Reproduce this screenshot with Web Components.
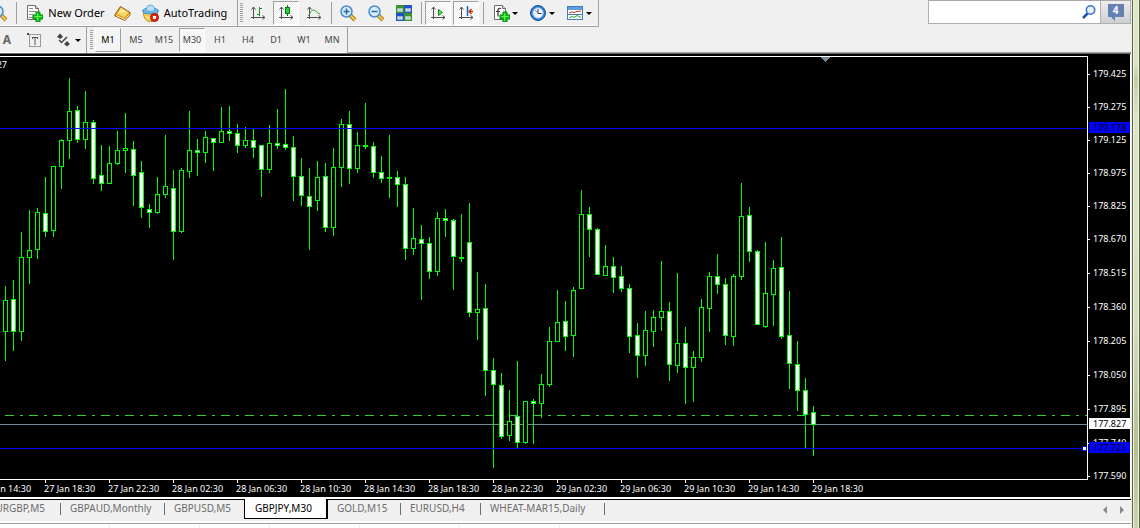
<!DOCTYPE html>
<html lang="en">
<head>
<meta charset="utf-8">
<title>GBPJPY,M30</title>
<style>
html,body{margin:0;height:100%}
body{background:#f0f0f0;font-family:"Noto Sans","DejaVu Sans Condensed",sans-serif;overflow:hidden}
</style>
</head>
<body>
<mt-app></mt-app>
<script>
const define = (name, html, setup) => customElements.define(name, class extends HTMLElement {
  constructor() {
    super();
    const t = document.createElement('template');
    t.innerHTML = html;
    this.attachShadow({mode: 'open'}).append(t.content.cloneNode(true));
  }
  connectedCallback() { if (setup) setup(this, this.shadowRoot); }
});

/* ---------- icons ---------- */
const axes = '<path d="M3.5 2v12M1 12.500h14" stroke="#505050"/><path d="M1.500 4.500l2-2.500 2 2.500M12.500 10.500l2.500 2-2.500 2" fill="none" stroke="#505050"/>';
const lens = sign => `<path d="M10 10l5 5" stroke="#a87818" stroke-width="4"/><path d="M10 10l5 5" stroke="#f4cc50" stroke-width="2"/><circle cx="6.500" cy="6.500" r="5.500" fill="#d4ecfb" stroke="#4a8cc8" stroke-width="1.500"/>${sign}`;
const sheet = '<path d="M1.500.5h8l3 3v11h-11z" fill="#fff" stroke="#6c6c6c"/><path d="M9.500.5v3h3" fill="#ddd" stroke="#6c6c6c"/>';
const plus = '<path d="M10 7h4v3h3v4h-3v3h-4v-3H7v-4h3z" fill="#10c818" stroke="#07860c"/><path d="M11.500 8.500v7M8.500 11.500h7" stroke="#6df05a"/>';
const ICONS = {
  find: lens(''),
  order: sheet + '<path d="M3 3.500h4M3 6.500h7M3 9.500h4M3 12.500h4" stroke="#8a8a8a"/>' + plus,
  book: '<path d="M1 9.500L6.500 1.500 16 7.500v2.500l-5 5.500-10-4.500z" fill="#d89416" stroke="#8a5a0c"/><path d="M2.500 9L7 2.500l8 5-4.500 5z" fill="#f8d468"/><path d="M5 7.500L7.500 4l5 3z" fill="#fdeeb0"/><path d="M2 10.500l9 4 4.500-5" fill="none" stroke="#fff3b8"/>',
  auto: '<path d="M1.500 8c0 5 3 8.500 7 8.500s7-3.500 7-8.500z" fill="#f6cf4c" stroke="#c08c18"/><path d="M3 11l5.500 3 3-3" fill="none" stroke="#fdeea6"/><ellipse cx="8.500" cy="6" rx="8" ry="3" fill="#6db8ea" stroke="#3f8fca"/><path d="M4 5c0-6.500 9-6.500 9 0-2 2-7 2-9 0z" fill="#b4e1fa" stroke="#5aa4d6"/><circle cx="12.500" cy="12.500" r="4" fill="#e02a14" stroke="#a61408"/><path d="M11 11h3v3h-3z" fill="#fff"/>',
  bars: axes + '<path d="M9.500 2v9M7 9.500h2.500M9.500 3.500H12" stroke="#0b9a1c" fill="none"/>',
  candles: axes + '<path d="M9.500 0v11" stroke="#067a12"/><rect x="7.500" y="2.500" width="4" height="6" fill="#2ed040" stroke="#067a12"/>',
  line: axes + '<path d="M2 11c2-2 3-6 5.500-6s3 3 6.500 4" fill="none" stroke="#2f9e3c"/>',
  zoomin: lens('<path d="M6.500 3.500v6M3.500 6.500h6" stroke="#2768a8" stroke-width="1.500"/>'),
  zoomout: lens('<path d="M3.500 6.500h6" stroke="#2768a8" stroke-width="1.500"/>'),
  tiles: '<path d="M0 0h8v8H0zM8 8h8v8H8z" fill="#39942e"/><path d="M8 0h8v8H8zM0 8h8v8H0z" fill="#1f52c8"/><path d="M1.500 3.500h5v3h-5zM9.500 3.500h5v3h-5zM1.500 11.500h5v3h-5zM9.500 11.500h5v3h-5z" fill="#eef5ff" stroke="#a9c8a5" stroke-width=".6"/><path d="M2.500 5h3M10.500 5h3M2.500 13h3M10.500 13h3" stroke="#8fa7c4"/>',
  scroll: axes + '<path d="M8.500 4.500v6l4-3z" fill="#5fe064" stroke="#0b8c18"/>',
  shift: axes + '<path d="M9.500 1v10" stroke="#1767b0" stroke-width="1.500"/><path d="M15 6.500h-4M13.500 4L11 6.500 13.500 9" fill="none" stroke="#c0340c" stroke-width="1.300"/>',
  indicator: sheet + '<path d="M8 3.500c-3-1-3 1-3 3v5M3 6.500h4" fill="none" stroke="#333" stroke-width="1.200"/>' + plus,
  clock: '<circle cx="8" cy="8" r="7.500" fill="#2b7cd0" stroke="#164f94"/><circle cx="8" cy="8" r="5.300" fill="#f2f8ff" stroke="#7db4ea"/><path d="M8 4v4.500h3.500" fill="none" stroke="#333"/><path d="M5 5l3 3" stroke="#888"/>',
  template: '<rect x=".5" y="1.500" width="15" height="13" fill="#fff" stroke="#3f7ebc"/><path d="M1 2h14v3H1z" fill="#5ea0dc"/><path d="M1 9.500h14" stroke="#3f7ebc"/><path d="M2 8l3-1 2 .5 3-1 4-.5" fill="none" stroke="#b03a20"/><path d="M2 13l3-1.500 2 1 3-2 4 2" fill="none" stroke="#2f9e3c"/>',
  textbox: '<rect x="2.500" y="2.500" width="11" height="12" fill="none" stroke="#444" stroke-dasharray="1 1"/><path d="M5 5.500h6M8 5v8M5.500 5v2M10.500 5v2" stroke="#555" fill="none"/><path d="M0 1h2v2H0z" fill="#444"/>',
  shapes: '<path d="M4 1.500L7 4.500 4.500 7 1 5zM11 9l3 3-3 2.500L8 12z" fill="#444"/><path d="M3 8l2.500 2.500L11 5" fill="none" stroke="#444" stroke-width="1.500"/>',
  search: '<path d="M6.500 9.500L2 14" stroke="#1d50b4" stroke-width="2.500"/><circle cx="9.500" cy="6" r="4.200" fill="#e7f0fd" stroke="#3b70d0" stroke-width="1.600"/>'
};
define('mt-icon', '<style>:host{display:block;width:18px;height:18px;flex:none}svg{display:block}</style><svg width="18" height="18" viewBox="-1 -1 18 18" aria-hidden="true"></svg>',
  (el, r) => { r.querySelector('svg').innerHTML = ICONS[el.getAttribute('name')]; });

/* ---------- toolbar parts ---------- */
define('mt-sep', '<style>:host{display:block;width:1px;margin:2px 1px 2px 2px;align-self:stretch;background:#a0a0a0;flex:none}</style>');
define('mt-grip', '<style>:host{display:block;width:3px;margin:3px 0;align-self:stretch;flex:none;background:repeating-linear-gradient(#a0a0a0 0 1px,#f0f0f0 1px 2px)}</style>');
define('mt-tool', `<style>
:host{display:block;flex:none}
button{display:flex;align-items:center;justify-content:center;gap:5px;box-sizing:border-box;height:24px;width:100%;margin:0;padding:0;border:1px solid transparent;background:none;font:11px/16px "Noto Sans",sans-serif;color:#000;white-space:nowrap}
:host([square]){width:26px}
:host([frame]) button{font-size:9px;color:#444}
:host([raised]) button{border-color:#fff #a0a0a0 #a0a0a0 #fff;background:#f5f5f5;color:#000}
:host([pressed]) button{border-color:#a0a0a0 #fff #fff #a0a0a0;background:repeating-conic-gradient(#fff 0 25%,#f0f0f0 0 50%) 0 0/2px 2px}
:host([menu]) button{gap:2px}
i{display:none;border:3px solid transparent;border-top-color:#000;border-bottom:0}
:host([menu]) i{display:block}
</style><button type="button"><slot></slot><i></i></button>`, (el, r) => {
  const l = el.getAttribute('label'); if (l) r.querySelector('button').setAttribute('aria-label', l);
  if (!el.hasAttribute('menu')) r.querySelector('i').remove();
});
define('mt-toolbar', `<style>
:host{display:flex;align-items:center;box-sizing:border-box;height:27px;gap:2px;border-bottom:1px solid #a0a0a0;border-right:1px solid #a0a0a0;padding-right:2px;flex:none;box-shadow:inset 0 -1px #f8f8f8}
:host([last]){border-bottom:0;height:26px}
</style><slot></slot>`);

define('mt-search', `<style>
:host{display:flex;box-sizing:border-box;width:203px;height:24px;border:1px solid #b0b0b0;border-top-color:#a8a8a8;background:#fff;align-items:center}
input{flex:1;min-width:0;border:0;outline:0;background:none;padding:0 4px;font:11px "Noto Sans",sans-serif}
button{width:30px;height:22px;margin:0 0 0 2px;padding:0;border:0;border-left:1px solid #b0b0b0;background:linear-gradient(#eee,#cfcfcf);display:flex;justify-content:center}
.b{position:relative;width:16px;height:13px;margin-top:3px;background:#6581b4;color:#fff;font:bold 10px/13px "Noto Sans",sans-serif;text-align:center}
.b::after{content:"";position:absolute;left:3px;top:13px;border-top:4px solid #6581b4;border-left:4px solid transparent}
</style><input type="search" aria-label="Search"><mt-icon name="search"></mt-icon><button type="button"><span class="b">4</span></button>`);

/* ---------- chart ---------- */
/* high, low, body top, body bottom, 1 = falling bar */
const BARS = `286 361 300 332 0;280 351 299 332 1;232 341 257 332 0;210 284 250 258 0;208 259 212 250 0;177 237 213 232 1;166 237 166 231 0;139 189 140 167 0;78 159 111 141 0;106 143 110 140 1;91 149 122 140 0;120 184 122 179 1;145 191 175 184 1;146 184 163 184 0;131 165 150 164 0;113 173 148 151 0;141 206 149 176 1;161 218 172 208 1;204 228 209 213 1;177 214 194 213 0;135 198 186 195 0;170 260 188 232 1;168 233 170 232 0;111 178 150 172 0;139 176 150 153 1;131 163 137 153 0;138 171 138 143 1;107 143 131 143 0;106 141 131 134 1;124 153 133 146 1;127 148 140 146 0;129 158 140 148 1;145 197 145 170 1;125 173 143 170 0;109 149 143 146 1;89 150 144 148 1;136 201 147 177 1;158 206 176 196 1;168 250 196 207 1;161 211 177 201 0;163 232 176 228 1;148 236 167 228 0;119 187 124 168 0;111 184 124 169 1;132 173 145 169 0;103 149 145 147 1;142 178 146 173 1;156 183 172 179 1;135 198 177 179 0;171 207 177 185 1;177 260 184 249 1;208 255 238 249 0;225 300 239 244 1;237 279 243 272 1;212 276 218 272 0;209 237 218 221 1;219 290 220 257 1;214 262 257 259 1;203 317 242 313 1;272 340 309 313 0;284 396 308 371 1;358 468 370 385 1;373 439 385 437 1;390 441 421 436 0;361 448 416 443 1;401 444 401 443 0;399 444 401 404 1;374 418 384 404 0;327 387 341 385 0;290 342 322 342 0;301 351 321 337 1;287 357 290 336 0;190 289 214 289 0;207 257 214 230 1;228 275 229 275 1;245 276 266 276 0;257 293 266 278 1;266 292 276 289 1;284 353 288 337 1;323 378 335 356 1;311 366 330 356 0;310 347 317 332 0;261 331 311 318 0;302 381 311 365 1;273 373 343 366 0;327 404 343 368 1;351 402 357 368 0;299 362 307 358 0;272 332 276 309 0;254 294 276 285 1;278 345 284 336 1;274 346 276 337 0;183 280 216 277 0;207 262 215 252 1;250 325 251 325 1;242 328 293 327 0;260 326 268 295 0;237 339 267 337 1;291 389 335 364 1;341 411 364 391 1;378 448 390 415 1;406 456 412 425 1`
  .split(';').map(s => s.split(' ').map(Number));
const TOP = 54;
const PRICES = [['179.425',74],['179.275',107],['179.125',140],['178.975',173],['178.825',206],['178.670',239],['178.515',273],['178.360',307],['178.205',341],['178.050',375],['177.895',409],['177.740',443],['177.590',476]];
const TIMES = ['27 Jan 14:30','27 Jan 18:30','27 Jan 22:30','28 Jan 02:30','28 Jan 06:30','28 Jan 10:30','28 Jan 14:30','28 Jan 18:30','28 Jan 22:30','29 Jan 02:30','29 Jan 06:30','29 Jan 10:30','29 Jan 14:30','29 Jan 18:30'];

define('mt-plot', `<style>
:host{display:block;flex:1;min-width:0}
svg{display:block;width:100%;height:443px;shape-rendering:crispEdges}
text{font:9px "Noto Sans",sans-serif;fill:#fff}
</style><svg role="img" aria-label="GBPJPY M30 candles"></svg>`, (el, r) => {
  let s = '<rect y="2" width="100%" height="1" fill="#fff"/><rect y="425" width="100%" height="1" fill="#fff"/>';
  s += `<line x1="5" x2="100%" y1="361.500" y2="361.500" stroke="#32cd32" stroke-dasharray="9 6 3 6"/><rect y="370" width="100%" height="1" fill="#778899"/>`;
  BARS.forEach(([h, l, t, b, f], i) => {
    const x = 5 + i * 8;
    s += `<rect x="${x}" y="${h - TOP}" width="1" height="${l - h}" fill="#0f0"/><rect x="${x - 2}" y="${t - TOP}" width="5" height="${b - t}" fill="#0f0"/>`;
    if (b - t > 2) s += `<rect x="${x - 1}" y="${t - TOP + 1}" width="3" height="${b - t - 2}" fill="${f ? '#fff' : '#000'}"/>`;
  });
  s += '<rect y="74" width="100%" height="1" fill="#00f"/><rect y="394" width="100%" height="1" fill="#00f"/>';
  s += '<path d="M820 3h10l-5 5z" fill="#778899"/><text x="7" y="14" text-anchor="end">177.827</text>';
  TIMES.forEach((t, i) => {
    const x = i * 64 - 19;
    s += `<rect x="${x}" y="426" width="1" height="3" fill="#fff"/><text x="${x - 1}" y="438">${t}</text>`;
  });
  r.querySelector('svg').innerHTML = s;
});
define('mt-scale', `<style>
:host{display:block;width:43px;flex:none}
svg{display:block;width:43px;height:443px;overflow:visible;shape-rendering:crispEdges}
text{font:9px "Noto Sans",sans-serif;fill:#fff}
</style><svg></svg>`, (el, r) => {
  let s = '<rect y="2" width="1" height="424" fill="#fff"/>';
  for (const [t, y] of PRICES) s += `<rect x="1" y="${y - TOP}" width="2" height="1" fill="#fff"/><text x="6" y="${y - TOP + 3}">${t}</text>`;
  const tag = (y, t, bg, fg) => `<rect x="2" y="${y - TOP - 5}" width="41" height="11" fill="${bg}"/><text x="6" y="${y - TOP + 4}" style="fill:${fg}">${t}</text>`;
  s += tag(127, '179.178', '#00f', '#000') + tag(423, '177.827', '#fff', '#000') + tag(447, '177.721', '#00f', '#000');
  s += '<rect x="-5" y="392" width="5" height="5" fill="#00f"/><rect x="-4" y="393" width="3" height="3" fill="#fff"/>';
  r.querySelector('svg').innerHTML = s;
});

/* ---------- tabs ---------- */
define('mt-tab', `<style>
:host{display:flex;align-items:flex-start;flex:none}
button{flex:1;margin:0;border:0;background:none;padding:0 0 0 9px;height:18px;font:10px/16px "Noto Sans",sans-serif;color:#6d6d6d;white-space:nowrap;text-align:left;display:flex;align-items:flex-start}
:host::after{content:"";width:1px;height:12px;margin-top:3px;background:#6d6d6d}
:host([nosep])::after,:host([active])::after{display:none}
:host([active]) button{box-sizing:border-box;background:#fff;color:#000;border:1px solid #000;border-top:0;border-right-width:2px;height:20px;margin-top:-1px;padding:1px 0 0 10px}
</style><button type="button" role="tab"><slot></slot></button>`);

define('mt-app', `<style>
:host{display:flex;min-height:100vh}
main{flex:1;min-width:0;display:flex;flex-direction:column}
header{display:flex;justify-content:space-between;align-items:flex-start;height:52px;border-bottom:1px solid #a0a0a0;box-shadow:0 1px #696969;margin-bottom:1px}
.rows{display:flex;flex-direction:column}
.row{display:flex}
.chart{display:flex;background:#000;border-right:1px solid #fff}
.tabs{display:flex;align-items:center;height:20px;margin-top:2px;border-top:1px solid #000;box-shadow:0 -2px #fff}
.tabs span{flex:1}
.tabs button{border:0;background:none;padding:0;margin:0 6px 0 5px;width:6px;height:8px}
.tabs svg{display:block}
.tabs [role=tablist]{display:flex;margin-left:-19px;height:20px}
.dock{flex:1;display:flex;min-height:4px;margin-top:3px;border-top:1px solid #a0a0a0;background:#fff;box-shadow:0 -2px #fcfcfc}
.dock div{box-sizing:border-box;border-right:1px solid #ececec}
.edge{width:9px;flex:none;box-sizing:border-box;border-left:1px solid #f0f0f0;background:linear-gradient(90deg,#5f6350 0 1px,#eef4dc 1px 2px,transparent 2px 6px,#eef4dc 6px 7px,#5c6844 7px),linear-gradient(#dde8c6,#d9e4c4 12%,#c4cda0 15%,#dbe6c8 22%,#d5e0bc 60%,#b4c093 85%,#c9d4ac)}
.a{font:bold 12px/16px "Noto Sans",sans-serif;color:#666}
</style>
<main>
<header>
 <div class="rows">
  <div class="row">
   <mt-toolbar style="width:238px;gap:0">
    <mt-tool label="Find" style="width:14px"><mt-icon name="find" style="margin-left:-16px"></mt-icon></mt-tool><mt-sep></mt-sep>
    <mt-tool style="width:82px;margin-left:6px"><mt-icon name="order"></mt-icon>New Order</mt-tool>
    <mt-tool label="MetaEditor" square style="margin-left:3px"><mt-icon name="book"></mt-icon></mt-tool>
    <mt-tool style="width:90px;margin-left:4px"><mt-icon name="auto"></mt-icon>AutoTrading</mt-tool>
   </mt-toolbar>
   <mt-toolbar style="padding-left:2px">
    <mt-grip></mt-grip>
    <mt-tool square label="Bar chart"><mt-icon name="bars"></mt-icon></mt-tool>
    <mt-tool square pressed label="Candlesticks"><mt-icon name="candles"></mt-icon></mt-tool>
    <mt-tool square label="Line chart"><mt-icon name="line"></mt-icon></mt-tool>
    <mt-sep></mt-sep>
    <mt-tool square label="Zoom in"><mt-icon name="zoomin"></mt-icon></mt-tool>
    <mt-tool square label="Zoom out"><mt-icon name="zoomout"></mt-icon></mt-tool>
    <mt-tool square label="Tile windows"><mt-icon name="tiles"></mt-icon></mt-tool>
    <mt-sep></mt-sep>
    <mt-tool square pressed label="Auto scroll"><mt-icon name="scroll"></mt-icon></mt-tool>
    <mt-tool square pressed label="Chart shift"><mt-icon name="shift"></mt-icon></mt-tool>
    <mt-sep></mt-sep>
    <mt-tool menu label="Indicators" style="width:35px"><mt-icon name="indicator"></mt-icon></mt-tool>
    <mt-tool menu label="Periods" style="width:35px"><mt-icon name="clock"></mt-icon></mt-tool>
    <mt-tool menu label="Templates" style="width:35px"><mt-icon name="template"></mt-icon></mt-tool>
   </mt-toolbar>
  </div>
  <div class="row">
   <mt-toolbar last style="width:87px;gap:0">
    <mt-tool label="Text" style="width:14px;margin-right:8px"><span class="a">A</span></mt-tool>
    <mt-tool square label="Text label"><mt-icon name="textbox"></mt-icon></mt-tool>
    <mt-tool menu label="Arrows" style="width:28px;margin-left:6px"><mt-icon name="shapes"></mt-icon></mt-tool>
   </mt-toolbar>
   <mt-toolbar last style="padding-left:3px">
    <mt-grip></mt-grip>
    <mt-tool square frame raised>M1</mt-tool><mt-tool square frame>M5</mt-tool><mt-tool square frame>M15</mt-tool><mt-tool square frame pressed>M30</mt-tool><mt-tool square frame>H1</mt-tool><mt-tool square frame>H4</mt-tool><mt-tool square frame>D1</mt-tool><mt-tool square frame>W1</mt-tool><mt-tool square frame>MN</mt-tool>
   </mt-toolbar>
  </div>
 </div>
 <mt-search></mt-search>
</header>
<div class="chart"><mt-plot></mt-plot><mt-scale></mt-scale></div>
<div class="tabs">
 <div role="tablist"><mt-tab style="width:80px">EURGBP,M5</mt-tab><mt-tab style="width:104px">GBPAUD,Monthly</mt-tab><mt-tab nosep style="width:79px">GBPUSD,M5</mt-tab><mt-tab active style="width:84px">GBPJPY,M30</mt-tab><mt-tab style="width:73px">GOLD,M15</mt-tab><mt-tab style="width:80px">EURUSD,H4</mt-tab><mt-tab style="width:124px">WHEAT-MAR15,Daily</mt-tab></div>
 <span></span>
 <button type="button" aria-label="Scroll left"><svg width="6" height="8"><path d="M5 0v8L1 4z" fill="#888"/></svg></button>
 <button type="button" aria-label="Scroll right"><svg width="6" height="8"><path d="M1 0v8l4-4z" fill="#888"/></svg></button>
</div>
<div class="dock"><div style="width:110px"></div><div style="width:90px"></div><div style="width:70px"></div><div style="width:90px"></div><div style="width:100px"></div><div style="width:100px"></div></div>
</main>
<div class="edge"></div>`);
</script>
</body>
</html>
